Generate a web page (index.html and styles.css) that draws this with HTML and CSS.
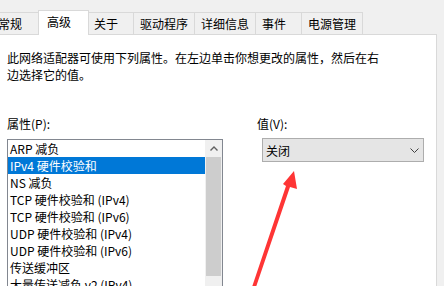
FILE: index.html
```html
<!DOCTYPE html>
<html lang="zh-CN">

<head>
    <meta charset="UTF-8">
    <title>高级</title>
    <link rel="stylesheet" href="styles.css">
</head>

<body>
    <div class="window">
        <div class="tabs">
            <div class="tab tab-first">常规</div>
            <div class="tab tab-active">高级</div>
            <div class="tab">关于</div>
            <div class="tab">驱动程序</div>
            <div class="tab">详细信息</div>
            <div class="tab">事件</div>
            <div class="tab">电源管理</div>
        </div>

        <div class="panel">
            <p class="intro">此网络适配器可使用下列属性。在左边单击你想更改的属性，然后在右边选择它的值。</p>

            <div class="props">
                <div class="prop-col">
                    <div class="label">属性(P):</div>
                    <div class="listbox">
                        <ul class="items">
                            <li>ARP 减负</li>
                            <li class="selected">IPv4 硬件校验和</li>
                            <li>NS 减负</li>
                            <li>TCP 硬件校验和 (IPv4)</li>
                            <li>TCP 硬件校验和 (IPv6)</li>
                            <li>UDP 硬件校验和 (IPv4)</li>
                            <li>UDP 硬件校验和 (IPv6)</li>
                            <li>传送缓冲区</li>
                            <li>大量传送减负 v2 (IPv4)</li>
                        </ul>
                        <div class="scrollbar">
                            <div class="sb-up">
                                <svg width="8" height="5" viewBox="0 0 8 5">
                                    <polyline points="0.5,4.5 4,1 7.5,4.5" fill="none" stroke="#606060" stroke-width="1.4"/>
                                </svg>
                            </div>
                            <div class="sb-thumb"></div>
                        </div>
                    </div>
                </div>

                <div class="value-col">
                    <div class="label">值(V):</div>
                    <div class="combo">
                        <span>关闭</span>
                        <svg width="9" height="5" viewBox="0 0 9 5">
                            <polyline points="0.5,0.5 4.5,4.5 8.5,0.5" fill="none" stroke="#404040" stroke-width="1"/>
                        </svg>
                    </div>
                </div>
            </div>
        </div>

        <!-- red annotation arrow pointing at the combo box -->
        <svg class="arrow" width="444" height="286" viewBox="0 0 444 286">
            <polygon points="294,171 297,189 290,187 256,287 252,287 286,186 283,184" fill="#fe3535"/>
        </svg>
    </div>
</body>
</html>
```

FILE: styles.css
```css
body {
    margin: 0;
    background-color: #f0f0f0;
    font-family: "Noto Sans CJK SC", "Microsoft YaHei", sans-serif;
    font-size: 12px;
    color: #000;
    overflow: hidden;
}

.window {
    position: relative;
    width: 444px;
    height: 286px;
    overflow: hidden;
}

/* tab strip */
.tabs {
    display: flex;
    align-items: flex-end;
    height: 22px;
    padding-top: 12px;
    margin-left: -9px;
}

.tab {
    box-sizing: border-box;
    min-width: 47px;
    height: 22px;
    padding: 0 6px;
    margin-right: -1px;
    border: 1px solid #d9d9d9;
    border-bottom: none;
    line-height: 21px;
    background-color: #f0f0f0;
    white-space: nowrap;
}

.tab-first {
    min-width: 50px;
}

.tab-active {
    position: relative;
    z-index: 1;
    min-width: 51px;
    height: 25px;
    margin: 0 -2px -1px -2px;
    padding-left: 8px;
    background-color: #fff;
}

/* page content */
.panel {
    box-sizing: border-box;
    width: 437px;
    height: 252px;
    padding: 14px 0 0 7px;
    background-color: #fff;
    border-top: 1px solid #d9d9d9;
    border-right: 1px solid #d9d9d9;
}

.intro {
    margin: 0;
    width: 375px;
    line-height: 17px;
}

.props {
    display: flex;
    margin-top: 32px;
}

.label {
    line-height: 17px;
}

.prop-col {
    width: 216px;
}

.listbox {
    display: flex;
    height: 200px;
    margin-top: 7px;
    border: 1px solid #828790;
    background-color: #fff;
}

.items {
    flex: 1;
    list-style: none;
    margin: 0;
    padding: 0;
}

.items li {
    height: 17px;
    line-height: 17px;
    padding-left: 2px;
    white-space: nowrap;
}

.items .selected {
    background-color: #0078d7;
    color: #fff;
}

.scrollbar {
    width: 17px;
    display: flex;
    flex-direction: column;
    background-color: #f0f0f0;
}

.sb-up {
    height: 17px;
    display: flex;
    align-items: center;
    justify-content: center;
}

.sb-thumb {
    height: 119px;
    margin: 0 1px;
    background-color: #cdcdcd;
}

.value-col {
    margin-left: 34px;
}

.combo {
    box-sizing: border-box;
    display: flex;
    align-items: center;
    justify-content: space-between;
    width: 162px;
    height: 24px;
    margin: 6px 0 0 5px;
    padding: 0 4px 0 3px;
    border: 1px solid #adadad;
    background-color: #e5e5e5;
}

.arrow {
    position: absolute;
    top: 0;
    left: 0;
    pointer-events: none;
}
```
